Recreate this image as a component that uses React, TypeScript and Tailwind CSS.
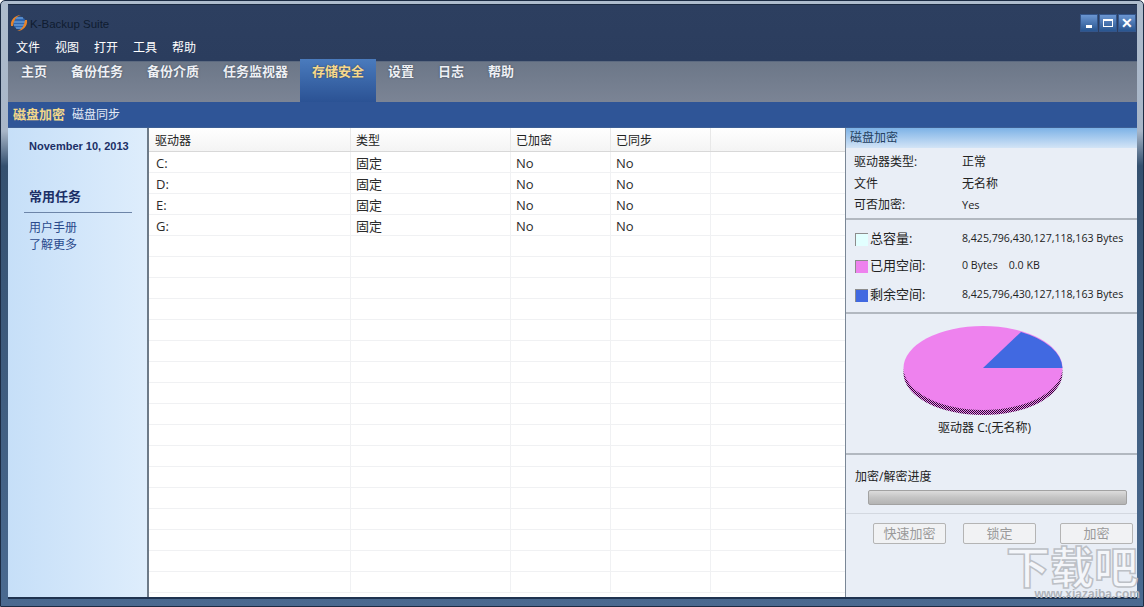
import React from 'react';

const cjk = "font-['Open_Sans','Noto_Sans_CJK_SC',sans-serif]";

const menus = ['文件', '视图', '打开', '工具', '帮助'];
const tabs = ['主页', '备份任务', '备份介质', '任务监视器', '存储安全', '设置', '日志', '帮助'];
const drives = ['C:', 'D:', 'E:', 'G:'];
const emptyRows = Array.from({ length: 17 }, (_, i) => i);

const Logo = () => (
  <svg width="18" height="18" viewBox="0 0 18 18">
    <circle cx="9.5" cy="9" r="6.5" fill="#2f66b0" />
    <path d="M6 4h7M4 8h11M4 11h11M6 14h7" stroke="#7fb0e6" strokeWidth="1" />
    <path d="M1 12C0 6 5 1 11 1c-4 1-7 4-8 11z" fill="#e8842a" />
    <path d="M17 6c1 6-4 11-10 11 4-1 7-4 8-11z" fill="#e8842a" />
  </svg>
);

const WinButton = ({ children, w }: { children: React.ReactNode; w: string }) => (
  <div className={`${w} h-[18px] flex items-center justify-center border border-[#34558a] bg-gradient-to-b from-[#6b96d2] to-[#28558f]`}>
    {children}
  </div>
);

const Row = ({ cells }: { cells: string[] }) => (
  <div className="flex h-[21px] shrink-0 border-b border-[#f0f1f3] text-[13px] text-[#2b2b2b] leading-[22px]">
    <div className="w-[202px] pl-[7px] border-r border-[#f0f1f3]">{cells[0]}</div>
    <div className="w-[160px] pl-[5px] border-r border-[#f0f1f3]">{cells[1]}</div>
    <div className="w-[100px] pl-[5px] border-r border-[#f0f1f3]">{cells[2]}</div>
    <div className="w-[100px] pl-[5px] border-r border-[#f0f1f3]">{cells[3]}</div>
    <div className="flex-1" />
  </div>
);

const Swatch = ({ color }: { color: string }) => (
  <span className={`w-[13px] h-[13px] ml-px shrink-0 border-l border-t border-[#8c8c8c] ${color}`} />
);

const ActionButton = ({ label, w }: { label: string; w: string }) => (
  <div className={`${w} h-[21px] flex items-center justify-center rounded-[2px] border border-[#b4b4b4] bg-[#f1f2f4] text-[13px] text-[#9a9a9a]`}>
    {label}
  </div>
);

export default function App() {
  return (
    <div className={`relative w-[1144px] h-[607px] overflow-hidden rounded-t-[5px] border border-[#1c2c44] bg-[linear-gradient(to_bottom,#aebccd_0px,#a8b6c8_130px,#34506f_165px,#4a6a90_100%)] pl-[7px] pr-[6px] pt-[3px] pb-[7px] flex flex-col ${cjk}`}>
      {/* title + menu */}
      <div className="h-[57px] shrink-0 bg-[linear-gradient(to_bottom,#2d3f60,#2b3d5e)] border-t border-[#1c2c44] flex flex-col">
        <div className="h-[33px] flex items-start">
          <div className="mt-[9px] ml-[2px]"><Logo /></div>
          <span className="mt-[12px] ml-[2px] text-[11.5px] leading-[15px] text-[#0f1c30] font-['Liberation_Sans',sans-serif]">K-Backup Suite</span>
          <div className="ml-auto mr-px mt-[9px] flex gap-px">
            <WinButton w="w-[18px]"><span className="w-[6px] h-[3px] mt-[6px] bg-white" /></WinButton>
            <WinButton w="w-[18px]"><span className="w-[10px] h-[8px] border border-white border-t-2" /></WinButton>
            <WinButton w="w-[18px]"><span className="text-white text-[14px] leading-none font-bold">✕</span></WinButton>
          </div>
        </div>
        <div className="flex gap-[15px] pl-[8px] text-[12px] leading-[20px] text-white">
          {menus.map(m => <span key={m}>{m}</span>)}
        </div>
      </div>

      {/* tabs */}
      <div className="h-[41px] shrink-0 flex pl-[1px] bg-gradient-to-b from-[#6c7788] to-[#7b8495] border-t border-[#5c6a80]">
        {tabs.map((t, i) => (
          <div
            key={t + i}
            className={`px-[12px] text-[13px] font-bold leading-[18px] whitespace-nowrap [text-shadow:0_0_2px_#3a4658] ${
              i === 4
                ? 'bg-gradient-to-b from-[#4a7bbd] to-[#2b5294] text-[#f6d98c] -mt-[3px] pt-[3px]'
                : 'text-[#eef0f4]'
            }`}
          >
            {t}
          </div>
        ))}
      </div>

      {/* sub tabs */}
      <div className="h-[25px] shrink-0 flex items-center gap-[7px] pl-[5px] bg-[#2f5597]">
        <span className="font-bold text-[13px] text-[#f2d78a]">磁盘加密</span>
        <span className="text-[12px] text-[#e4ebf6]">磁盘同步</span>
      </div>

      {/* body */}
      <div className="flex-1 flex min-h-0 border-t border-[#3d5f95] border-b-2 border-b-[#1f3350]">
        <aside className="w-[141px] shrink-0 bg-gradient-to-r from-[#c6dff8] to-[#deedfc] border-r-2 border-[#6d7a88] flex flex-col items-stretch text-[#1b2f66]">
          <div className="mt-[10px] pl-[21px] text-[11px] leading-[16px] font-bold font-['Liberation_Sans',sans-serif]">November 10, 2013</div>
          <div className="mt-[33px] pl-[21px] text-[13px] leading-[18px] font-bold">常用任务</div>
          <div className="mt-[7px] ml-[16px] mr-[15px] border-t border-[#6d85a8]" />
          <div className="mt-[6px] pl-[21px] text-[12px] leading-[17px] text-[#2a4a8c]">
            <div>用户手册</div>
            <div>了解更多</div>
          </div>
        </aside>

        <main className="w-[696px] shrink-0 bg-white flex flex-col overflow-hidden">
          <div className="flex h-[24px] shrink-0 border-b border-[#d8d8d8] bg-gradient-to-b from-white to-[#f4f4f4] text-[12px] leading-[25px] text-[#222]">
            <div className="w-[202px] pl-[6px] border-r border-[#e8e8e8]">驱动器</div>
            <div className="w-[160px] pl-[5px] border-r border-[#e8e8e8]">类型</div>
            <div className="w-[100px] pl-[5px] border-r border-[#e8e8e8]">已加密</div>
            <div className="w-[100px] pl-[5px] border-r border-[#e8e8e8]">已同步</div>
          </div>
          {drives.map(d => <Row key={d} cells={[d, '固定', 'No', 'No']} />)}
          {emptyRows.map(i => <Row key={i} cells={['', '', '', '']} />)}
        </main>

        <section className="flex-1 bg-[#e9eef6] border-l border-[#7a8796] flex flex-col text-[12px] text-[#222]">
          <div className="h-[20px] shrink-0 pl-[4px] leading-[20px] text-[#24405f] bg-gradient-to-b from-[#7db2e6] to-[#d3e4f6]">磁盘加密</div>

          <div className="h-[72px] shrink-0 pl-[8px] pt-[3px] border-b-2 border-[#b2b8c0] leading-[21px]">
            <div className="flex"><span className="w-[108px]">驱动器类型:</span><span>正常</span></div>
            <div className="flex mt-px"><span className="w-[108px]">文件</span><span>无名称</span></div>
            <div className="flex"><span className="w-[108px]">可否加密:</span><span className="text-[11px]">Yes</span></div>
          </div>

          <div className="h-[94px] shrink-0 pl-[8px] pt-[12px] border-b-2 border-[#b2b8c0] flex flex-col gap-[13px]">
            <div className="flex items-center h-[14px]">
              <Swatch color="bg-[#e2ffff]" />
              <span className="w-[94px] pl-[2px] text-[13px]">总容量:</span>
              <span className="text-[10.6px] whitespace-nowrap">8,425,796,430,127,118,163 Bytes</span>
            </div>
            <div className="flex items-center h-[14px]">
              <Swatch color="bg-[#ee82ee]" />
              <span className="w-[94px] pl-[2px] text-[13px]">已用空间:</span>
              <span className="text-[10.6px] whitespace-pre">0 Bytes    0.0 KB</span>
            </div>
            <div className="flex items-center h-[14px] mt-[2px]">
              <Swatch color="bg-[#4169e1]" />
              <span className="w-[94px] pl-[2px] text-[13px]">剩余空间:</span>
              <span className="text-[10.6px] whitespace-nowrap">8,425,796,430,127,118,163 Bytes</span>
            </div>
          </div>

          <div className="h-[141px] shrink-0 border-b-2 border-[#b2b8c0] flex flex-col items-center">
            <svg width="162" height="94" viewBox="0 0 162 94" className="mt-[12px] mr-[18px]">
              <defs>
                <pattern id="dither" width="2" height="2" patternUnits="userSpaceOnUse">
                  <rect width="2" height="2" fill="#ee82ee" />
                  <rect width="1" height="1" fill="#2a1030" />
                  <rect x="1" y="1" width="1" height="1" fill="#2a1030" />
                </pattern>
              </defs>
              <ellipse cx="81" cy="47" rx="79.5" ry="42" fill="url(#dither)" />
              <ellipse cx="81" cy="42" rx="79.5" ry="42" fill="#ee82ee" />
              <path d="M81 42 L119 6 A79.5 42 0 0 1 160.5 42 Z" fill="#4169e1" />
            </svg>
            <div className="mr-[14px] text-[12px] leading-[16px]">驱动器 C:(无名称)</div>
          </div>

          <div className="h-[59px] shrink-0 border-b border-[#d3d8e0] pl-[9px] pt-[14px]">
            <div className="text-[12px] leading-[16px]">加密/解密进度</div>
            <div className="mt-[5px] ml-[13px] w-[259px] h-[15px] rounded-[2px] border border-[#a2a2a2] bg-gradient-to-b from-[#dcdcdc] via-[#c4c4c4] to-[#b4b4b4]" />
          </div>

          <div className="flex pl-[27px] pt-[9px] gap-[17px] relative z-10">
            <ActionButton label="快速加密" w="w-[73px]" />
            <ActionButton label="锁定" w="w-[73px]" />
            <ActionButton label="加密" w="w-[73px] ml-[7px]" />
          </div>
        </section>
      </div>

      {/* site watermark lying over the corner */}
      <div className="absolute right-[3px] bottom-[6px] w-[136px] flex flex-col items-center pointer-events-none">
        <span className="text-[44px] leading-[44px] font-bold whitespace-nowrap text-white/50 [-webkit-text-stroke:1.5px_#bcc0c6]">下载吧</span>
        <span className="self-end text-[12px] leading-[11px] font-bold text-[#b0b4ba] font-['Liberation_Sans',sans-serif]">www.xiazaiba.com</span>
      </div>
    </div>
  );
}
